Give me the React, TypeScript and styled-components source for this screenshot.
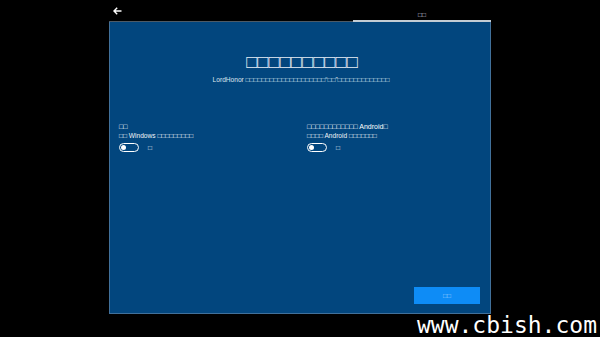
import styled, { createGlobalStyle } from 'styled-components';

const GlobalStyle = createGlobalStyle`
  html, body {
    margin: 0;
    padding: 0;
    background: #000;
  }
  body {
    font-family: 'Liberation Sans', Arial, sans-serif;
    color: #fff;
  }
`;

const Screen = styled.div`
  position: relative;
  width: 600px;
  height: 337px;
  background: #000;
  overflow: hidden;
  padding-left: 109px;
  box-sizing: border-box;
`;

const Frame = styled.div`
  width: 382px;
  display: flex;
  flex-direction: column;
`;

const Header = styled.div`
  height: 22px;
  display: grid;
  grid-template-columns: 244px 1fr;
`;

const Step = styled.div<{ $active?: boolean }>`
  display: flex;
  flex-direction: column;
  justify-content: flex-end;
  align-items: ${({ $active }) => ($active ? 'center' : 'flex-start')};
  border-bottom: ${({ $active }) => ($active ? '2px solid #c3ccd4' : '1px solid #4d5a66')};
`;

const BackButton = styled.button`
  all: unset;
  display: flex;
  margin: 0 0 6px 4px;
  cursor: pointer;
`;

const StepLabel = styled.span`
  font-size: 6.5px;
  line-height: 8px;
  color: #d8dde2;
  margin-bottom: 1px;
`;

const Panel = styled.div`
  height: 292px;
  box-sizing: border-box;
  background: #02467e;
  border: 1px solid #41709a;
  border-top: none;
  display: flex;
  flex-direction: column;
  padding: 0 10px 9px 9px;
`;

const Title = styled.h1`
  margin: 29px 0 0;
  padding-left: 5px;
  text-align: center;
  font-weight: normal;
  font-size: 18.5px;
  line-height: 21px;
  color: #e8eef5;
`;

const Subtitle = styled.p`
  margin: 3px 0 0;
  padding-left: 3px;
  text-align: center;
  font-size: 6.6px;
  line-height: 9px;
  color: #dfe7ef;
`;

const Options = styled.div`
  margin-top: 38px;
  display: grid;
  grid-template-columns: 188px 1fr;
`;

const Option = styled.div`
  display: flex;
  flex-direction: column;
`;

const OptionLabel = styled.div`
  font-size: 7px;
  line-height: 9px;
  color: #fff;
`;

const OptionDesc = styled.div`
  font-size: 6.6px;
  line-height: 9px;
  color: #f0f4f8;
`;

const SwitchRow = styled.div`
  margin-top: 3px;
  display: flex;
  align-items: center;
  gap: 9px;
`;

const Switch = styled.div<{ $on?: boolean }>`
  width: 20px;
  height: 9px;
  box-sizing: border-box;
  border: 1px solid #fff;
  border-radius: 5px;
  display: flex;
  align-items: center;
  justify-content: ${({ $on }) => ($on ? 'flex-end' : 'flex-start')};
  padding: 0 1px;

  &::after {
    content: '';
    width: 5px;
    height: 5px;
    border-radius: 50%;
    background: #fff;
  }
`;

const SwitchText = styled.span`
  font-size: 6.6px;
  line-height: 9px;
  color: #e8eef5;
`;

const Footer = styled.div`
  margin-top: auto;
  display: flex;
  justify-content: flex-end;
`;

const NextButton = styled.button`
  all: unset;
  width: 66px;
  height: 17px;
  background: #0e8cf6;
  color: #a9d6ff;
  font-size: 6.5px;
  text-align: center;
  line-height: 17px;
`;

const Watermark = styled.div`
  position: absolute;
  right: 3px;
  bottom: 0;
  font-family: 'DejaVu Sans Mono', 'Liberation Mono', monospace;
  font-size: 23px;
  line-height: 23px;
  color: #fff;
`;

function ArrowLeft() {
  return (
    <svg width='9' height='8' viewBox='0 0 9 8' fill='none'>
      <path d='M8.5 4H1.2M4.2 0.8L1 4l3.2 3.2' stroke='#fff' strokeWidth='1.4' />
    </svg>
  );
}

const OPTIONS = [
  { label: '□□', desc: '□□ Windows □□□□□□□□□' },
  { label: '□□□□□□□□□□□□ Android□', desc: '□□□□ Android □□□□□□□' },
];

function App() {
  return (
    <Screen>
      <GlobalStyle />
      <Frame>
        <Header>
          <Step>
            <BackButton aria-label='back'>
              <ArrowLeft />
            </BackButton>
          </Step>
          <Step $active>
            <StepLabel>□□</StepLabel>
          </Step>
        </Header>
        <Panel>
          <Title>□□□□□□□□□□</Title>
          <Subtitle>LordHonor □□□□□□□□□□□□□□□□□□□□“□□”□□□□□□□□□□□□□</Subtitle>
          <Options>
            {OPTIONS.map((option) => (
              <Option key={option.desc}>
                <OptionLabel>{option.label}</OptionLabel>
                <OptionDesc>{option.desc}</OptionDesc>
                <SwitchRow>
                  <Switch />
                  <SwitchText>□</SwitchText>
                </SwitchRow>
              </Option>
            ))}
          </Options>
          <Footer>
            <NextButton>□□</NextButton>
          </Footer>
        </Panel>
      </Frame>
      <Watermark>www.cbish.com</Watermark>
    </Screen>
  );
}

export default App;
